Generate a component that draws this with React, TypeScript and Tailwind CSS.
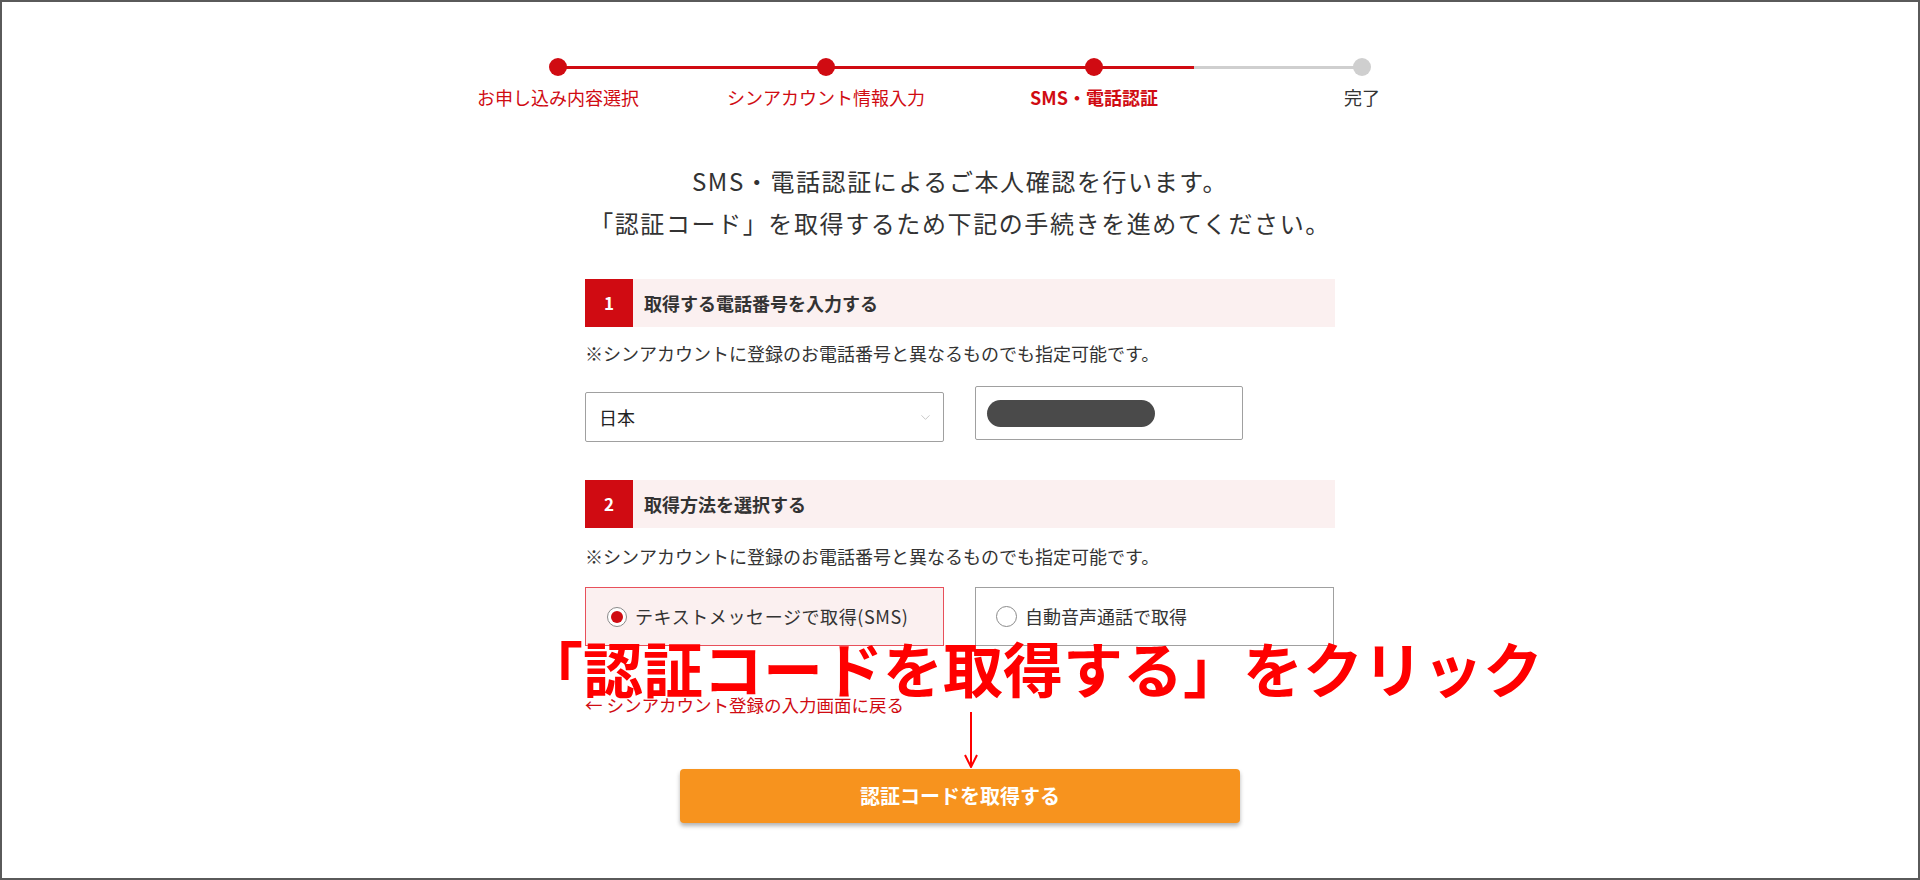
import React from "react";
import { ChevronDown } from "lucide-react";

const steps = [
  { label: "お申し込み内容選択", state: "done" },
  { label: "シンアカウント情報入力", state: "done" },
  { label: "SMS・電話認証", state: "current" },
  { label: "完了", state: "todo" },
];

const note = "※シンアカウントに登録のお電話番号と異なるものでも指定可能です。";

function SectionHeader({ num, title }: { num: string; title: string }) {
  return (
    <div className="flex h-[48px] items-center bg-[#fbf0f0]">
      <div className="flex h-full w-[48px] items-center justify-center bg-[#d00b12] text-[17px] font-bold text-white">
        {num}
      </div>
      <div className="pl-[11px] text-[18px] font-bold text-[#333]">{title}</div>
    </div>
  );
}

export default function App() {
  return (
    <div
      className="relative h-[880px] w-full overflow-hidden border-2 border-[#5a5a5a] bg-white text-[#333]"
      style={{ fontFamily: '"Noto Sans CJK JP", "Noto Sans", sans-serif' }}
    >
      {/* progress */}
      <div className="mx-auto mt-[56px] w-[1072px]">
        <div className="relative h-[18px]">
          <div className="absolute left-[134px] right-[134px] top-[8px] h-[3px] bg-[#cfcfcf]" />
          <div className="absolute left-[134px] top-[8px] h-[3px] w-[636px] bg-[#d00b12]" />
          <div className="relative grid h-full grid-cols-4">
            {steps.map((s) => (
              <div key={s.label} className="flex justify-center">
                <div
                  className={
                    s.state === "todo"
                      ? "h-[18px] w-[18px] rounded-full bg-[#cfcfcf]"
                      : "h-[18px] w-[18px] rounded-full bg-[#d00b12]"
                  }
                />
              </div>
            ))}
          </div>
        </div>
        <div className="mt-[9px] grid grid-cols-4">
          {steps.map((s) => (
            <div
              key={s.label}
              className={
                s.state === "current"
                  ? "text-center text-[18px] font-bold leading-[24px] text-[#d00b12]"
                  : s.state === "done"
                    ? "text-center text-[18px] leading-[24px] text-[#d00b12]"
                    : "text-center text-[18px] leading-[24px] text-[#333]"
              }
            >
              {s.label}
            </div>
          ))}
        </div>
      </div>

      {/* lead */}
      <div className="mt-[51px] text-center text-[24px] leading-[42px] tracking-[1.6px] text-[#333]">
        <p>SMS・電話認証によるご本人確認を行います。</p>
        <p>「認証コード」を取得するため下記の手続きを進めてください。</p>
      </div>

      <div className="mx-auto mt-[35px] w-[750px]">
        <SectionHeader num="1" title="取得する電話番号を入力する" />
        <p className="mt-[13px] text-[18px] leading-[26px]">{note}</p>

        <div className="mt-[20px] flex items-start gap-[31px]">
          <div className="mt-[6px] flex h-[50px] w-[359px] items-center justify-between rounded-[2px] border border-[#a0a0a0] pl-[13px] pr-[10px]">
            <span className="text-[18px] text-[#222]">日本</span>
            <ChevronDown size={15} strokeWidth={1.2} className="text-[#b5b5b5]" />
          </div>
          <div className="flex h-[54px] w-[268px] items-center rounded-[2px] border border-[#a0a0a0] pl-[11px]">
            <div className="h-[27px] w-[168px] rounded-full bg-[#4a4a4a]" />
          </div>
        </div>

        <div className="mt-[38px]">
          <SectionHeader num="2" title="取得方法を選択する" />
        </div>
        <p className="mt-[15px] text-[18px] leading-[26px]">{note}</p>

        <div className="mt-[18px] flex gap-[31px]">
          <label className="flex h-[59px] w-[359px] items-center gap-[8px] border border-[#e8505b] bg-[#fbf0f0] pl-[21px]">
            <span className="flex h-[20px] w-[20px] items-center justify-center rounded-full border border-[#8a8a8a] bg-white">
              <span className="h-[12px] w-[12px] rounded-full bg-[#d00b12]" />
            </span>
            <span className="text-[18px] tracking-[0.6px] text-[#333]">テキストメッセージで取得(SMS)</span>
          </label>
          <label className="flex h-[59px] w-[359px] items-center gap-[8px] border border-[#a0a0a0] bg-white pl-[20px]">
            <span className="h-[21px] w-[21px] rounded-full border border-[#8a8a8a] bg-white" />
            <span className="text-[18px] text-[#333]">自動音声通話で取得</span>
          </label>
        </div>

        <p className="mt-[47px] text-[17.5px] leading-[24px] text-[#d00b12]">← シンアカウント登録の入力画面に戻る</p>

        <div className="mt-[52px] flex justify-center">
          <button className="h-[54px] w-[560px] rounded-[4px] bg-[#f7931e] text-[20px] font-bold text-white shadow-[0_3px_4px_rgba(0,0,0,0.3)]">
            認証コードを取得する
          </button>
        </div>
      </div>

      {/* annotation overlay */}
      <div className="absolute left-[521px] top-[635px] whitespace-nowrap text-[60px] font-bold leading-[60px] text-[#ff0000]">
        「認証コードを取得する」をクリック
      </div>
      <svg className="absolute left-[961px] top-[710px]" width="16" height="56" viewBox="0 0 16 56">
        <line x1="8" y1="0" x2="8" y2="54" stroke="#ff0000" strokeWidth="2" />
        <path d="M2 43 L8 55 L14 43" fill="none" stroke="#ff0000" strokeWidth="2" />
      </svg>
    </div>
  );
}
